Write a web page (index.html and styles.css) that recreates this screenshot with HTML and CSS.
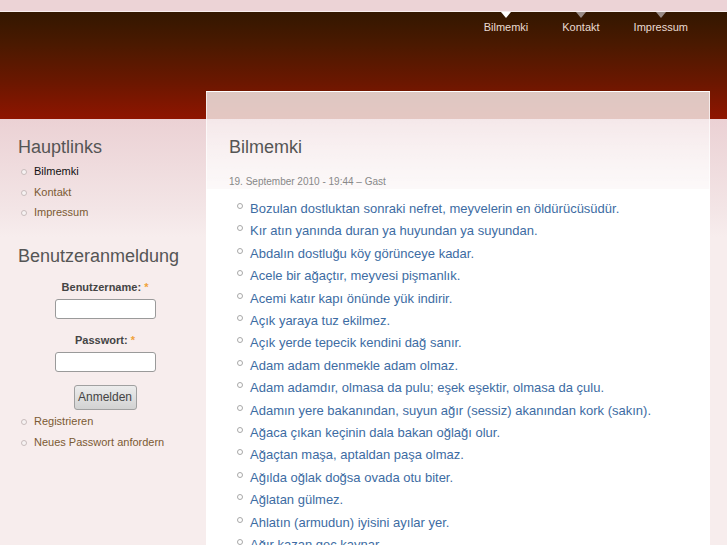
FILE: index.html
```html
<!DOCTYPE html>
<html lang="de">
<head>
<meta charset="utf-8">
<title>Bilmemki</title>
<link rel="stylesheet" href="styles.css">
</head>
<body>
<div class="topstrip"></div>
<header class="header">
  <nav class="nav">
    <a class="nav-item active" href="#">Bilmemki</a>
    <a class="nav-item" href="#">Kontakt</a>
    <a class="nav-item" href="#">Impressum</a>
  </nav>
</header>
<div class="main">
  <aside class="sidebar">
    <h2 class="side-title">Hauptlinks</h2>
    <ul class="side-list">
      <li><a class="current" href="#">Bilmemki</a></li>
      <li><a href="#">Kontakt</a></li>
      <li><a href="#">Impressum</a></li>
    </ul>
    <h2 class="side-title second">Benutzeranmeldung</h2>
    <form class="login">
      <label class="lbl">Benutzername: <span class="req">*</span></label>
      <input class="field" type="text">
      <label class="lbl lbl2">Passwort: <span class="req">*</span></label>
      <input class="field" type="password">
      <button class="btn" type="button">Anmelden</button>
    </form>
    <ul class="side-list links">
      <li><a href="#">Registrieren</a></li>
      <li><a href="#">Neues Passwort anfordern</a></li>
    </ul>
  </aside>
  <section class="content">
    <h1 class="title">Bilmemki</h1>
    <div class="meta">19. September 2010 - 19:44 – Gast</div>
    <ul class="proverbs">
      <li>Bozulan dostluktan sonraki nefret, meyvelerin en öldürücüsüdür.</li>
      <li>Kır atın yanında duran ya huyundan ya suyundan.</li>
      <li>Abdalın dostluğu köy görünceye kadar.</li>
      <li>Acele bir ağaçtır, meyvesi pişmanlık.</li>
      <li>Acemi katır kapı önünde yük indirir.</li>
      <li>Açık yaraya tuz ekilmez.</li>
      <li>Açık yerde tepecik kendini dağ sanır.</li>
      <li>Adam adam denmekle adam olmaz.</li>
      <li>Adam adamdır, olmasa da pulu; eşek eşektir, olmasa da çulu.</li>
      <li>Adamın yere bakanından, suyun ağır (sessiz) akanından kork (sakın).</li>
      <li>Ağaca çıkan keçinin dala bakan oğlağı olur.</li>
      <li>Ağaçtan maşa, aptaldan paşa olmaz.</li>
      <li>Ağılda oğlak doğsa ovada otu biter.</li>
      <li>Ağlatan gülmez.</li>
      <li>Ahlatın (armudun) iyisini ayılar yer.</li>
      <li>Ağır kazan geç kaynar.</li>
    </ul>
  </section>
</div>
</body>
</html>
```
FILE: styles.css
```css
html, body {
  margin: 0;
  padding: 0;
}
body {
  font-family: "Liberation Sans", Arial, sans-serif;
  background: #f7eded;
  overflow: hidden;
  height: 545px;
}
.topstrip {
  height: 11px;
  background: #ecd3d6;
  border-bottom: 1px solid #f8eeee;
}
.header {
  height: 107px;
  background: linear-gradient(#331700 0%, #4a1900 30%, #6a1700 65%, #8f1500 100%);
  display: flex;
  justify-content: flex-end;
  align-items: flex-start;
}
.nav {
  display: flex;
  margin-right: 22px;
}
.nav-item {
  position: relative;
  display: block;
  font-size: 11px;
  line-height: 14px;
  color: #eadbd2;
  text-decoration: none;
  padding: 8px 17px 0;
}
.nav-item::before {
  content: "";
  position: absolute;
  top: 0;
  left: 50%;
  margin-left: -5px;
  border-left: 5px solid transparent;
  border-right: 5px solid transparent;
  border-top: 6px solid #9a8c88;
}
.nav-item.active::before {
  border-top-color: #ffffff;
}
.main {
  display: flex;
  align-items: flex-start;
  background: linear-gradient(#ebd1d4 0px, #f3e5e6 90px, #f7eded 118px, #f7eded 100%);
  min-height: 500px;
}
.sidebar {
  width: 206px;
  flex: none;
  padding-top: 17px;
}
.side-title {
  margin: 0 0 3px 18px;
  font-size: 18px;
  line-height: 22px;
  font-weight: normal;
  color: #555555;
}
.side-title.second {
  margin-top: 22px;
  margin-bottom: 0;
}
.side-list {
  list-style: none;
  margin: 0;
  padding: 0 0 0 34px;
}
.side-list li {
  position: relative;
  font-size: 11px;
  line-height: 20.5px;
}
.side-list li::before {
  content: "";
  position: absolute;
  left: -13px;
  top: 8px;
  width: 4px;
  height: 4px;
  border-radius: 50%;
  background: #f6f2f2;
  border: 1px solid #c8bcbc;
}
.side-list a {
  color: #7b5a33;
  text-decoration: none;
}
.side-list a.current {
  color: #111111;
}
.side-list.links {
  margin-top: 1px;
}
.side-list.links li {
  line-height: 21px;
}
.login {
  display: flex;
  flex-direction: column;
  align-items: center;
  padding-left: 4px;
  padding-top: 13px;
}
.lbl {
  font-size: 11px;
  line-height: 14px;
  font-weight: bold;
  color: #444444;
}
.lbl2 {
  margin-top: 14px;
}
.req {
  color: #f0a23a;
}
.field {
  margin: 5px 0 0;
  width: 101px;
  height: 20px;
  box-sizing: border-box;
  border: 1px solid #9a9a9a;
  border-radius: 3px;
  background: #ffffff;
  padding: 0 3px;
}
.btn {
  margin-top: 13px;
  width: 63px;
  height: 25px;
  box-sizing: border-box;
  border: 1px solid #a0a0a0;
  border-radius: 3px;
  background: linear-gradient(#ececec, #d2d2d2);
  font-family: "Liberation Sans", Arial, sans-serif;
  font-size: 12px;
  color: #444444;
  padding: 0;
}
.content {
  flex: none;
  width: 504px;
  box-sizing: border-box;
  margin-top: -28px;
  min-height: 460px;
  border: 1px solid rgba(255, 255, 255, 0.65);
  border-bottom: none;
  background: linear-gradient(rgba(255,255,255,0.76) 0px, rgba(255,255,255,0.76) 27px, rgba(255,255,255,0.5) 27px, rgba(255,255,255,0.8) 97px, #ffffff 97px);
  padding: 44px 0 0 22px;
}
.title {
  margin: 0;
  font-size: 18px;
  line-height: 22px;
  font-weight: normal;
  color: #555555;
}
.meta {
  margin-top: 17px;
  font-size: 10px;
  line-height: 14px;
  color: #888888;
}
.proverbs {
  list-style: none;
  margin: 9px 0 0;
  padding: 0 0 0 21px;
}
.proverbs li {
  position: relative;
  font-size: 13px;
  line-height: 22.4px;
  color: #3d6ca3;
  white-space: nowrap;
}
.proverbs li::before {
  content: "";
  position: absolute;
  left: -13px;
  top: 5px;
  width: 4px;
  height: 4px;
  border-radius: 50%;
  border: 1px solid #a8a8a8;
  background: #ffffff;
}
```
